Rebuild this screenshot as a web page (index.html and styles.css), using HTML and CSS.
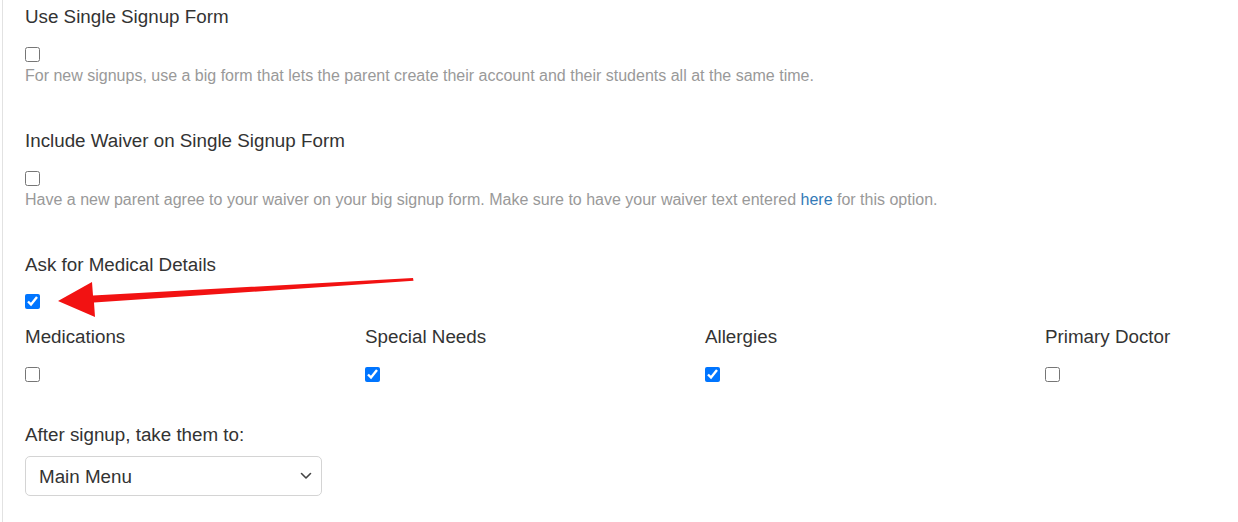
FILE: index.html
```html
<!DOCTYPE html>
<html lang="en">
<head>
<meta charset="utf-8">
<title>Signup Settings</title>
<link rel="stylesheet" href="styles.css">
</head>
<body>
<div class="panel">
  <div class="group">
    <label class="title">Use Single Signup Form</label>
    <input type="checkbox" class="check">
    <p class="help">For new signups, use a big form that lets the parent create their account and their students all at the same time.</p>
  </div>
  <div class="group">
    <label class="title">Include Waiver on Single Signup Form</label>
    <input type="checkbox" class="check">
    <p class="help">Have a new parent agree to your waiver on your big signup form. Make sure to have your waiver text entered <a href="#" class="link">here</a> for this option.</p>
  </div>
  <div class="group medical">
    <label class="title">Ask for Medical Details</label>
    <input type="checkbox" class="check check-main" checked>
    <div class="fields">
      <div class="field">
        <label class="title">Medications</label>
        <input type="checkbox" class="check check-sub">
      </div>
      <div class="field">
        <label class="title">Special Needs</label>
        <input type="checkbox" class="check check-sub" checked>
      </div>
      <div class="field">
        <label class="title">Allergies</label>
        <input type="checkbox" class="check check-sub" checked>
      </div>
      <div class="field">
        <label class="title">Primary Doctor</label>
        <input type="checkbox" class="check check-sub">
      </div>
    </div>
  </div>
  <div class="group after">
    <label class="title">After signup, take them to:</label>
    <div class="select-wrap">
      <select class="select">
        <option>Main Menu</option>
      </select>
      <svg class="chevron" width="12" height="8" viewBox="0 0 12 8"><path d="M1.5 1.5 L6 6 L10.5 1.5" fill="none" stroke="#444" stroke-width="1.6" stroke-linecap="round" stroke-linejoin="round"/></svg>
    </div>
  </div>
</div>
<svg class="annotation" width="1238" height="522" viewBox="0 0 1238 522">
  <polygon points="58,301 92,282 93,295.5 413,278 413.5,280.8 94,302.5 95,317" fill="#f21212"/>
</svg>
</body>
</html>
```

FILE: styles.css
```css
html, body {
  margin: 0;
  padding: 0;
  background: #fff;
}

body {
  font-family: "Liberation Sans", Arial, sans-serif;
  color: #333;
  position: relative;
  overflow: hidden;
}

.panel {
  margin-left: 2px;
  border-left: 1px solid #e2e2e2;
  padding: 4px 0 0 22px;
  min-height: 522px;
  box-sizing: border-box;
}

.group {
  margin-bottom: 42px;
}

.title {
  display: block;
  font-size: 18.8px;
  line-height: 26px;
  color: #333;
}

.check {
  display: block;
  margin: 17px 0 0 0;
  width: 15px;
  height: 15px;
}

.check-main {
  margin-top: 16px;
}

.check-sub {
  margin-top: 17px;
}

.help {
  margin: 4px 0 0 0;
  font-size: 16px;
  line-height: 20px;
  color: #999;
}

.link {
  color: #337ab7;
  text-decoration: none;
}

.fields {
  display: grid;
  grid-template-columns: 340px 340px 340px 1fr;
  margin-top: 15px;
}

.group.medical {
  margin-bottom: 40px;
}

.select-wrap {
  position: relative;
  width: 297px;
  margin-top: 8px;
}

.select {
  appearance: none;
  -webkit-appearance: none;
  display: block;
  width: 297px;
  height: 40px;
  box-sizing: border-box;
  border: 1px solid #d4d4d4;
  border-radius: 5px;
  background: #fff;
  padding: 0 0 0 13px;
  font-family: "Liberation Sans", Arial, sans-serif;
  font-size: 18.8px;
  color: #333;
}

.chevron {
  position: absolute;
  right: 10px;
  top: 16px;
  pointer-events: none;
}

.annotation {
  position: absolute;
  left: 0;
  top: 0;
  pointer-events: none;
}
```
